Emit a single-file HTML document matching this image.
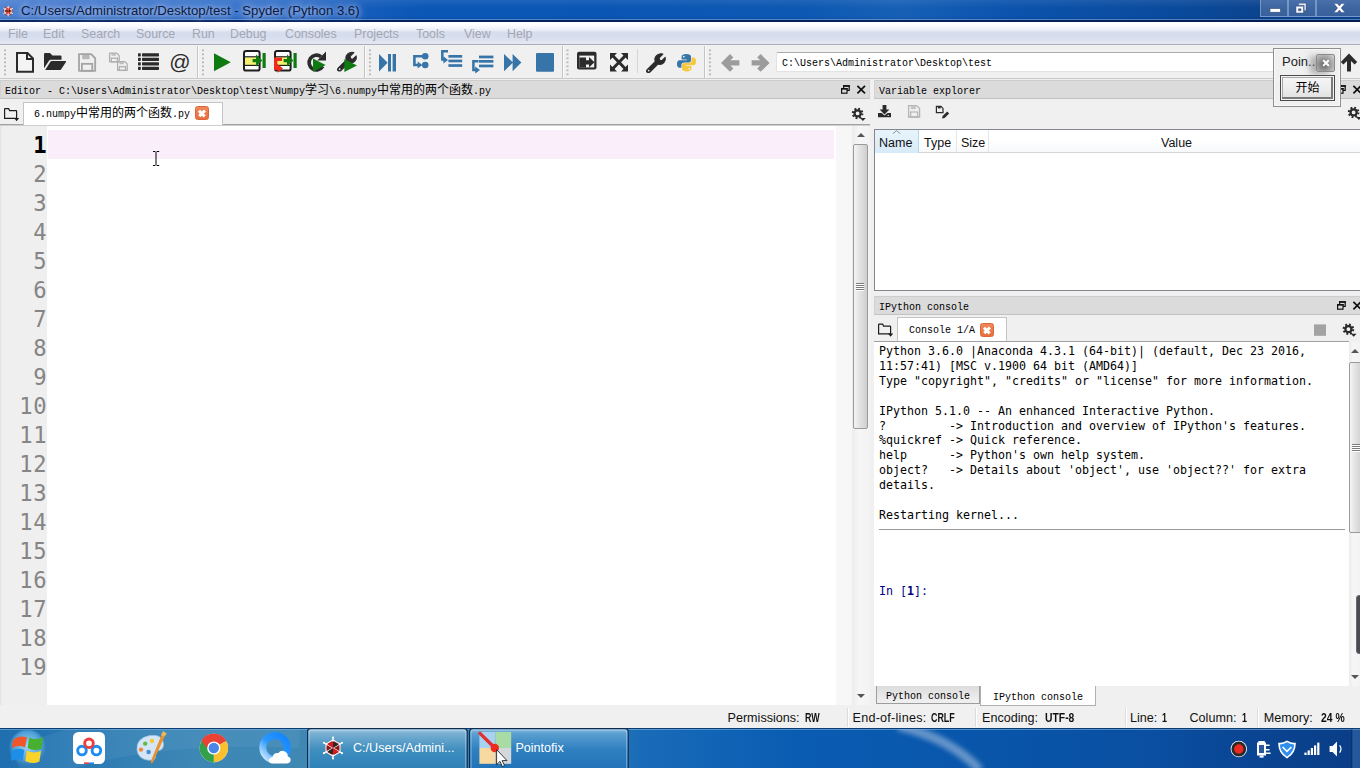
<!DOCTYPE html>
<html lang="zh">
<head>
<meta charset="utf-8">
<title>Spyder (Python 3.6)</title>
<style>
*{box-sizing:border-box;margin:0;padding:0}
html,body{width:1360px;height:768px;overflow:hidden;background:#f0f0f0}
body{position:relative;font-family:"Liberation Sans","Noto Sans CJK SC",sans-serif;font-size:12px;color:#000}
.abs{position:absolute}
.ui{font-family:"Liberation Sans","Noto Sans CJK SC",sans-serif}
.sim{font-family:"Liberation Mono","Noto Sans CJK SC",monospace;font-size:12px;white-space:pre;color:#000}
.sim i{font-style:normal;font-size:10px;letter-spacing:0}
.mono{font-family:"DejaVu Sans Mono","Liberation Mono",monospace}
svg{position:absolute;overflow:visible}

/* title bar */
#titlebar{left:0;top:0;width:1360px;height:22px;background:linear-gradient(90deg,#4f84d3 0,#4a80d0 16px,#3f78cd 150px,#2f6dc7 300px,#155cba 370px,#0b57b6 420px,#0a56b4 600px,#0d58b2 800px,#1760b6 900px,#0c54ae 1000px,#0a4a9c 1180px,#0b448e 1260px,#0b448e 1360px)}
#titlebar .shade{left:0;top:0;width:1360px;height:22px;background:linear-gradient(180deg,rgba(255,255,255,.08) 0,rgba(255,255,255,0) 8px,rgba(0,0,40,0) 16px,rgba(0,10,60,.12) 19.5px,rgba(130,175,230,.55) 19.5px,rgba(130,175,230,.55) 20.5px,rgba(0,20,70,.8) 20.5px,rgba(0,20,70,.8) 22px)}
#title{left:21px;top:2px;font-size:13.2px;line-height:17px;color:#0a1a40;white-space:pre;text-shadow:0 0 5px rgba(225,225,255,.7),0 0 9px rgba(215,220,255,.55),0 0 14px rgba(210,215,255,.45),0 2px 12px rgba(210,215,255,.4)}

/* menu */
#menubar{left:0;top:22px;width:1360px;height:23px;background:linear-gradient(180deg,#fff 0,#fdfdff 3px,#f3f5fc 6px,#e7ebf6 8.5px,#d6ddec 10px,#d6ddec 14px,#dce1ee 18px,#e3e7f1 21px,#e3e7f1 22px,#a9adb9 22px,#a9adb9 23px)}
#menubar span{position:absolute;top:5px;font-size:12.4px;line-height:15px;color:#a3a7b4;white-space:pre}

/* toolbar */
#toolbar{left:0;top:45px;width:1360px;height:35px;background:#f0f0f0}
.grip{position:absolute;top:50px;width:2px;height:26px;background:repeating-linear-gradient(180deg,#b8b8b8 0,#b8b8b8 1.5px,transparent 1.5px,transparent 4px)}
.vsep{position:absolute;top:47px;width:1px;height:31px;background:#d0d0d0;box-shadow:1px 0 0 #fff}

.docktitle{position:absolute;height:19px;background:#dbdbdb;border:1px solid #c2c2c2;border-left-color:#d2d2d2;border-right-color:#d2d2d2;border-top-color:#cdcdcd}
.docktitle .sim{position:absolute;left:4px;top:3px;line-height:14px}

/* panes */
.tabbar-line{position:absolute;height:2px;background:linear-gradient(180deg,#a2a2a2 0,#a2a2a2 1px,#cfcfcf 1px,#cfcfcf 2px)}
.tab{position:absolute;background:#fff;border:1px solid #c4c4c4;border-bottom:none}
.tab .sim{position:absolute;top:4px;line-height:14px}
.closeico{position:absolute;width:14px;height:14px;border-radius:2.5px;background:linear-gradient(180deg,#f0885a,#e86f3c);border:1px solid #d9673a}
.closeico:before,.closeico:after{content:"";position:absolute;left:2.2px;top:4.6px;width:7.6px;height:2.6px;background:#fff;transform:rotate(45deg)}
.closeico:after{transform:rotate(-45deg)}

#lnarea{left:0;top:126px;width:47px;height:579px;background:#efefef}
#edwhite{left:47px;top:126px;width:789px;height:579px;background:#fff}
#edgap{left:836px;top:126px;width:16px;height:579px;background:#f7f7f7}
#curline{left:48px;top:130px;width:786px;height:29px;background:#f9eef9}
.ln{position:absolute;left:0;width:47.4px;text-align:right;padding-right:0;font-size:22.2px;line-height:29px;color:#858585;letter-spacing:.7px}
.ln.cur{color:#000;font-weight:bold}

.vscroll{position:absolute;background:linear-gradient(90deg,#ececec,#f6f6f6 40%,#f3f3f3)}
.thumb{position:absolute;border:1px solid #9a9a9a;border-radius:2px;background:linear-gradient(90deg,#f4f4f4 0,#e2e2e2 45%,#cfcfcf 100%)}
.arr-up{position:absolute;width:0;height:0;border-left:4px solid transparent;border-right:4px solid transparent;border-bottom:4px solid #555}
.arr-dn{position:absolute;width:0;height:0;border-left:4px solid transparent;border-right:4px solid transparent;border-top:4px solid #555}
.gripv{position:absolute;width:8px;height:8px;background:repeating-linear-gradient(180deg,#7a7a7a 0,#7a7a7a 1px,#fff 1px,#fff 2px)}

#vartable{left:874px;top:129px;width:490px;height:162px;background:#fff;border:1px solid #828790}
#varhead{left:875px;top:130px;width:485px;height:23px;background:linear-gradient(180deg,#fff 0,#fff 50%,#f7f8fa 100%);border-bottom:1px solid #d5d5d5}
#varhead .hl{position:absolute;left:0;top:0;width:44px;height:23px;background:linear-gradient(180deg,#e8f4fb,#d6ebf8);border-right:1px solid #b8d6ea}
#varhead span{position:absolute;top:6px;font-size:12.5px;line-height:15px;color:#111}
#varhead .cs{position:absolute;top:0;width:1px;height:22px;background:#e4e5e8}

#console{left:874px;top:341px;width:475px;height:345px;background:#fff;border-top:1px solid #a0a0a0}
#context{left:879px;top:344px;font-size:11.63px;line-height:14.91px;white-space:pre;color:#000}
#prompt{left:879px;top:584px;font-size:11.63px;line-height:15px;white-space:pre;color:#000080}
#consep{left:879px;top:529px;width:466px;height:1px;background:#9a9a9a}

#statusbar{left:0;top:706px;width:1360px;height:22px;background:#f0f0f0}
#statusbar span{position:absolute;top:5px;font-size:12.6px;line-height:15px;white-space:pre;color:#111}
#statusbar b{position:absolute;top:5px;font-size:12.2px;line-height:15px;white-space:pre;color:#111;transform-origin:0 50%;transform:scaleX(.73)}
#statusbar .ss{position:absolute;top:2px;width:1px;height:19px;background:#dcdcdc;box-shadow:1px 0 0 #fff}

#taskbar{left:0;top:728px;width:1360px;height:40px;background:linear-gradient(90deg,#1f6eae 0,#2676b2 60px,#3380b4 130px,#3d87b5 200px,#3f88b4 300px,#2a78b6 600px,#1a6cb8 640px,#1163b6 720px,#0a5cb2 800px,#0857ac 950px,#0a4fa2 1150px,#0a4492 1260px,#0a3d86 1360px)}

#pathbox{left:776px;top:52px;width:520px;height:20px;background:#fff;border:1px solid #e2e2e2;border-top-color:#ababab;border-radius:2px}
#pathbox .sim{position:absolute;left:5px;top:3px;line-height:14px}

.btab{position:absolute}
.btab .sim{position:absolute;left:0;right:0;top:3px;line-height:14px;text-align:center}
#pfx{left:1273px;top:48px;width:68px;height:59px;background:#f0f0f0;border:1px solid #8e8e8e;box-shadow:0 0 0 1px rgba(255,255,255,.6) inset}
#pfx .t{position:absolute;left:8px;top:5px;font-size:13px;line-height:16px;color:#222}
#pfx .x{position:absolute;left:42px;top:5px;width:19px;height:18px;border:1px solid #8a8a8a;border-radius:2px;background:radial-gradient(circle at 40% 60%,#6a6a6a 0,#9a9a9a 45%,#d8d8d8 100%);box-shadow:-6px 2px 6px rgba(120,120,120,.55)}
#pfx .x:before,#pfx .x:after{content:"";position:absolute;left:4.5px;top:6.8px;width:8px;height:2.2px;background:#fff;transform:rotate(45deg)}
#pfx .x:after{transform:rotate(-45deg)}
#pfx .btn{position:absolute;left:6px;top:26px;width:55px;height:26px;border:1px solid #4a4a4a;box-shadow:0 0 0 1px #f4f4f4 inset,-1px -1px 0 2px #7a7a7a inset,0 0 0 2px #a8a8a8 inset;background:linear-gradient(180deg,#f7f7f7,#ececec 55%,#dedede);text-align:center}
#pfx .btn span{font-family:"Liberation Sans","Noto Sans CJK SC",sans-serif;font-size:12px;line-height:24px;color:#000}
#winbtns{left:1260px;top:0;width:100px;height:18px}
#winbtns .wb{position:absolute;top:0;height:16.5px;border:1px solid rgba(150,180,225,.6);border-top:none;background:linear-gradient(180deg,#4a70aa,#3d659f 50%,#38609c)}
</style>
</head>
<body>

<!-- ===== window title bar ===== -->
<div id="titlebar" class="abs">
  <div class="shade abs"></div>
  <svg style="left:2px;top:5px" width="13" height="13" viewBox="0 0 13 13"><circle cx="6.2" cy="6" r="4.6" fill="#a01c14"/><path d="M6.2,0.6 V11.4 M1.4,3.2 L11,8.8 M1.4,8.8 L11,3.2" stroke="#f4e8f0" stroke-width=".9"/><path d="M6.2,2 L9.8,4 V8 L6.2,10 L2.6,8 V4 Z" fill="none" stroke="#f4e8f0" stroke-width=".8"/><circle cx="6.2" cy="6" r="2.2" fill="#e2502a"/><path d="M4.4,4.6 L6.2,6 L4.4,7.6 Z M8,4.6 L6.2,6 L8,7.6 Z" fill="#3a1410"/></svg>
  <div id="title" class="abs ui">C:/Users/Administrator/Desktop/test - Spyder (Python 3.6)</div>
</div>

<!-- ===== menu bar ===== -->
<div id="menubar" class="abs ui">
  <span style="left:8px">File</span>
  <span style="left:43px">Edit</span>
  <span style="left:81px">Search</span>
  <span style="left:136px">Source</span>
  <span style="left:192px">Run</span>
  <span style="left:230px">Debug</span>
  <span style="left:285px">Consoles</span>
  <span style="left:354px">Projects</span>
  <span style="left:416px">Tools</span>
  <span style="left:464px">View</span>
  <span style="left:507px">Help</span>
</div>

<!-- ===== toolbar ===== -->
<div id="toolbar" class="abs"></div>
<div id="pathbox" class="abs"><div class="sim"><i>C:\Users\Administrator\Desktop\test</i></div></div>
<svg id="tbicons" style="left:0;top:0" width="1360" height="130" viewBox="0 0 1360 130">
<rect x="4" y="49.5" width="2" height="1.6" fill="#b4b4b4"/>
<rect x="4" y="53.5" width="2" height="1.6" fill="#b4b4b4"/>
<rect x="4" y="57.5" width="2" height="1.6" fill="#b4b4b4"/>
<rect x="4" y="61.5" width="2" height="1.6" fill="#b4b4b4"/>
<rect x="4" y="65.5" width="2" height="1.6" fill="#b4b4b4"/>
<rect x="4" y="69.5" width="2" height="1.6" fill="#b4b4b4"/>
<rect x="4" y="73.5" width="2" height="1.6" fill="#b4b4b4"/>
<rect x="202" y="49.5" width="2" height="1.6" fill="#b4b4b4"/>
<rect x="202" y="53.5" width="2" height="1.6" fill="#b4b4b4"/>
<rect x="202" y="57.5" width="2" height="1.6" fill="#b4b4b4"/>
<rect x="202" y="61.5" width="2" height="1.6" fill="#b4b4b4"/>
<rect x="202" y="65.5" width="2" height="1.6" fill="#b4b4b4"/>
<rect x="202" y="69.5" width="2" height="1.6" fill="#b4b4b4"/>
<rect x="202" y="73.5" width="2" height="1.6" fill="#b4b4b4"/>
<rect x="369" y="49.5" width="2" height="1.6" fill="#b4b4b4"/>
<rect x="369" y="53.5" width="2" height="1.6" fill="#b4b4b4"/>
<rect x="369" y="57.5" width="2" height="1.6" fill="#b4b4b4"/>
<rect x="369" y="61.5" width="2" height="1.6" fill="#b4b4b4"/>
<rect x="369" y="65.5" width="2" height="1.6" fill="#b4b4b4"/>
<rect x="369" y="69.5" width="2" height="1.6" fill="#b4b4b4"/>
<rect x="369" y="73.5" width="2" height="1.6" fill="#b4b4b4"/>
<rect x="566.5" y="49.5" width="2" height="1.6" fill="#b4b4b4"/>
<rect x="566.5" y="53.5" width="2" height="1.6" fill="#b4b4b4"/>
<rect x="566.5" y="57.5" width="2" height="1.6" fill="#b4b4b4"/>
<rect x="566.5" y="61.5" width="2" height="1.6" fill="#b4b4b4"/>
<rect x="566.5" y="65.5" width="2" height="1.6" fill="#b4b4b4"/>
<rect x="566.5" y="69.5" width="2" height="1.6" fill="#b4b4b4"/>
<rect x="566.5" y="73.5" width="2" height="1.6" fill="#b4b4b4"/>
<rect x="709" y="49.5" width="2" height="1.6" fill="#b4b4b4"/>
<rect x="709" y="53.5" width="2" height="1.6" fill="#b4b4b4"/>
<rect x="709" y="57.5" width="2" height="1.6" fill="#b4b4b4"/>
<rect x="709" y="61.5" width="2" height="1.6" fill="#b4b4b4"/>
<rect x="709" y="65.5" width="2" height="1.6" fill="#b4b4b4"/>
<rect x="709" y="69.5" width="2" height="1.6" fill="#b4b4b4"/>
<rect x="709" y="73.5" width="2" height="1.6" fill="#b4b4b4"/>
<rect x="197.0" y="46" width="1" height="32" fill="#c4c4c4"/><rect x="198.0" y="46" width="1" height="32" fill="#fbfbfb"/>
<rect x="364.0" y="46" width="1" height="32" fill="#c4c4c4"/><rect x="365.0" y="46" width="1" height="32" fill="#fbfbfb"/>
<rect x="562.0" y="46" width="1" height="32" fill="#c4c4c4"/><rect x="563.0" y="46" width="1" height="32" fill="#fbfbfb"/>
<rect x="704.0" y="46" width="1" height="32" fill="#c4c4c4"/><rect x="705.0" y="46" width="1" height="32" fill="#fbfbfb"/>
<rect x="637" y="49" width="1" height="24" fill="#d6d6d6"/>
<path d="M17,53 H27.5 L33,58.5 V71.7 H17 Z" fill="#f4f4f4" stroke="#2b2b2b" stroke-width="2" stroke-linejoin="miter"/><path d="M27,53.5 V59 H32.5" fill="none" stroke="#2b2b2b" stroke-width="2"/>
<path d="M44,54.2 Q44,53 45.2,53 H50 L52.5,55.5 H60.5 Q61.5,55.5 61.5,56.5 V59.8 H50.5 Q49.6,59.8 49,60.7 L44,68.3 Z" fill="#2b2b2b"/><path d="M45.2,70 L50.6,61.6 Q51,61 51.8,61 H65.2 Q66.6,61 65.8,62.2 L61,69.4 Q60.6,70 59.8,70 Z" fill="#2b2b2b"/>
<path d="M79,54.2 H91.15 L95.2,58.25 V70.80000000000001 H79 Z" fill="none" stroke="#a4a4a4" stroke-width="1.8" stroke-linejoin="round"/><rect x="82.24" y="54.2" width="7.29" height="4.98" fill="#a4a4a4" opacity=".75"/><rect x="81.916" y="63.828" width="10.368" height="6.972" fill="none" stroke="#a4a4a4" stroke-width="1.8"/>
<path d="M109.6,53.2 H116.79999999999998 L119.19999999999999,55.6 V61.800000000000004 H109.6 Z" fill="none" stroke="#b0b0b0" stroke-width="1.3" stroke-linejoin="round"/><rect x="111.52" y="53.2" width="4.32" height="2.5799999999999996" fill="#b0b0b0" opacity=".75"/><rect x="111.32799999999999" y="58.188" width="6.144" height="3.6119999999999997" fill="none" stroke="#b0b0b0" stroke-width="1.3"/>
<path d="M117.6,61.6 H124.79999999999998 L127.19999999999999,64.0 V70.4 H117.6 Z" fill="none" stroke="#b0b0b0" stroke-width="1.3" stroke-linejoin="round"/><rect x="119.52" y="61.6" width="4.32" height="2.64" fill="#b0b0b0" opacity=".75"/><rect x="119.32799999999999" y="66.70400000000001" width="6.144" height="3.696" fill="none" stroke="#b0b0b0" stroke-width="1.3"/>
<rect x="138" y="53.2" width="2.8" height="3.2" rx=".6" fill="#2b2b2b"/><rect x="142" y="53.2" width="17" height="3.2" rx=".6" fill="#2b2b2b"/>
<rect x="138" y="57.7" width="2.8" height="3.2" rx=".6" fill="#2b2b2b"/><rect x="142" y="57.7" width="17" height="3.2" rx=".6" fill="#2b2b2b"/>
<rect x="138" y="62.2" width="2.8" height="3.2" rx=".6" fill="#2b2b2b"/><rect x="142" y="62.2" width="17" height="3.2" rx=".6" fill="#2b2b2b"/>
<rect x="138" y="66.7" width="2.8" height="3.2" rx=".6" fill="#2b2b2b"/><rect x="142" y="66.7" width="17" height="3.2" rx=".6" fill="#2b2b2b"/>
<text x="180" y="68.5" text-anchor="middle" font-family="Liberation Sans, sans-serif" font-size="21" fill="#2b2b2b">@</text>
<path d="M214,53.3 L230.8,62.3 L214,71.3 Z" fill="#0f7a10"/>
<rect x="244" y="51" width="15.6" height="19.6" rx="2.2" fill="#fdfdfd" stroke="#1e1e1e" stroke-width="2"/><rect x="245" y="57.2" width="13.6" height="7.8" fill="#f6f072"/><rect x="244" y="56.2" width="15.6" height="1.2" fill="#1e1e1e"/><rect x="244" y="64.8" width="15.6" height="1.2" fill="#1e1e1e"/><path d="M252.6,58.9 H256 V54.6 L262.4,60.6 L256,66.6 V62.3 H252.6 Z" fill="#0f7a10"/><rect x="262.5" y="53" width="3.2" height="15" fill="#0f7a10"/>
<rect x="275" y="51" width="15.6" height="19.6" rx="2.2" fill="#fdfdfd" stroke="#1e1e1e" stroke-width="2"/><rect x="276" y="57.2" width="13.6" height="7.8" fill="#f6f072"/><rect x="275" y="56.2" width="15.6" height="1.2" fill="#1e1e1e"/><rect x="275" y="64.8" width="15.6" height="1.2" fill="#1e1e1e"/><path d="M283.6,58.9 H287 V54.6 L293.4,60.6 L287,66.6 V62.3 H283.6 Z" fill="#0f7a10"/><rect x="293.5" y="53" width="3.2" height="15" fill="#0f7a10"/>
<path d="M282,57.6 H274 V70 H277.6 V72.8 L283,68.4 L277.6,64 V66.6 H277.4 V61 H282 Z" fill="#ee2a1c"/>
<path d="M321,56.6 A7.4,7.4 0 1 0 322.8,66.4" fill="none" stroke="#2b2b2b" stroke-width="3.6"/><path d="M326,51.6 V60.4 H317.2 Z" fill="#2b2b2b"/>
<path d="M313,58.4 L325.6,65 L313,71.8 Z" fill="#0f7a10"/>
<g transform="translate(337,52) scale(0.98)"><path d="M2.2,19.4 Q0.6,19.6 0.6,17.8 Q0.6,17 1.2,16.4 L9.4,8.2 Q8.2,4.6 11,2 Q13.8,-0.4 17.2,0.6 L13.4,4.4 L14,6.8 L16.2,7.4 L19.6,4 Q20.4,7 18.2,9.4 Q15.6,12 12.2,10.8 L4,19 Q3.2,19.6 2.2,19.4 Z" fill="#2b2b2b" stroke="#2b2b2b" stroke-width="1.1" stroke-linejoin="round"/><circle cx="2.7" cy="17.4" r=".9" fill="#f0f0f0"/></g>
<path d="M344.4,59 L357,65.4 L344.4,72 Z" fill="#0f7a10"/>
<path d="M379,54 L387.6,62.8 L379,71.5 Z" fill="#3775a9"/><rect x="388" y="54" width="3" height="17.5" fill="#3775a9"/><rect x="392.6" y="54" width="3.4" height="17.5" fill="#3775a9"/>
<circle cx="425.2" cy="56.2" r="3.3" fill="#3775a9"/><circle cx="425.2" cy="65" r="3.3" fill="#3775a9"/><path d="M422,56.2 H414.4 V65 H418.5" fill="none" stroke="#3775a9" stroke-width="2.6"/><path d="M417.6,61.4 L422.4,65 L417.6,68.6 Z" fill="#3775a9"/>
<rect x="448.4" y="55" width="13.8" height="2.7" fill="#3775a9"/>
<rect x="448.4" y="59.6" width="13.8" height="2.7" fill="#3775a9"/>
<rect x="448.4" y="64.2" width="13.8" height="2.7" fill="#3775a9"/>
<path d="M448,51.3 H442.3 V59.6 H444" fill="none" stroke="#3775a9" stroke-width="2.5"/><path d="M443.4,56.2 L448,60 L443.4,63.6 Z" fill="#3775a9"/>
<rect x="479" y="55.6" width="14.4" height="2.7" fill="#3775a9"/>
<rect x="479" y="60" width="14.4" height="2.7" fill="#3775a9"/>
<rect x="479" y="64.6" width="14.4" height="2.7" fill="#3775a9"/>
<path d="M478.5,61.3 H473.4 V70 H476" fill="none" stroke="#3775a9" stroke-width="2.5"/><path d="M475.2,66.4 L480,70 L475.2,73.4 Z" fill="#3775a9"/>
<path d="M504,54 L513,62.6 L504,71.2 Z M512.6,54 L521.4,62.6 L512.6,71.2 Z" fill="#3775a9"/>
<rect x="536" y="53" width="18" height="18.8" rx="1" fill="#3775a9"/>
<rect x="577" y="51.8" width="19.5" height="17.8" rx="2" fill="#2b2b2b"/><rect x="579.4" y="55.6" width="14.8" height="11.8" fill="#f2f2f2"/><path d="M579.4,57.6 H586 V60.2 H589 V57 L594.4,62.2 L589,67.4 V64.4 H586 V67.4 H579.4 Z" fill="#2b2b2b"/>
<path d="M612.5,55.5 L625.5,69 M625.5,55.5 L612.5,69" stroke="#2b2b2b" stroke-width="3" fill="none"/><path d="M610,53 H617 L610,60 Z M628,53 V60 L621,53 Z M610,71.5 V64.5 L617,71.5 Z M628,71.5 H621 L628,64.5 Z" fill="#2b2b2b"/>
<g transform="translate(646,53.5) scale(0.98)"><path d="M2.2,19.4 Q0.6,19.6 0.6,17.8 Q0.6,17 1.2,16.4 L9.4,8.2 Q8.2,4.6 11,2 Q13.8,-0.4 17.2,0.6 L13.4,4.4 L14,6.8 L16.2,7.4 L19.6,4 Q20.4,7 18.2,9.4 Q15.6,12 12.2,10.8 L4,19 Q3.2,19.6 2.2,19.4 Z" fill="#2b2b2b" stroke="#2b2b2b" stroke-width="1.1" stroke-linejoin="round"/><circle cx="2.7" cy="17.4" r=".9" fill="#f0f0f0"/></g>
<path d="M686.2,54 Q681.6,54 681.6,56.8 V59.4 H686.8 V60.2 H679.6 Q677,60.2 677,64 Q677,67.8 679.6,67.8 H681.4 V65.2 Q681.4,62.4 684.2,62.4 H688.8 Q691,62.4 691,60.2 V56.8 Q691,54 686.2,54 Z" fill="#3775a9"/><circle cx="683.8" cy="56.6" r=".9" fill="#f0f0f0"/><path d="M686.8,71.4 Q691.4,71.4 691.4,68.6 V66 H686.2 V65.2 H693.4 Q696,65.2 696,61.4 Q696,57.6 693.4,57.6 H691.6 V60.2 Q691.6,63 688.8,63 H684.2 Q682,63 682,65.2 V68.6 Q682,71.4 686.8,71.4 Z" fill="#f7c83c"/><circle cx="689.2" cy="68.8" r=".9" fill="#f0f0f0"/>
<path d="M721,62.9 L730,54 L733.4,57.4 L730.4,60.2 H739.4 V65.6 H730.4 L733.4,68.4 L730,71.8 Z" fill="#9c9c9c"/>
<path d="M769.6,62.9 L760.6,54 L757.2,57.4 L760.2,60.2 H751.6 V65.6 H760.2 L757.2,68.4 L760.6,71.8 Z" fill="#9c9c9c"/>
<path d="M1349,53.6 L1357.2,62 L1354.6,64.6 L1351,61 V71.4 H1347 V61 L1343.4,64.6 L1340.8,62 Z" fill="#2b2b2b"/>
</svg>

<!-- ===== Editor dock ===== -->
<div class="abs" style="left:0;top:78px;width:1360px;height:1px;background:#c9c9c9"></div>
<div class="docktitle" style="left:0;top:80px;width:870px"><div class="sim"><i>Editor - C:\Users\Administrator\Desktop\test\Numpy</i>学习<i>\6.numpy</i>中常用的两个函数<i>.py</i></div></div>
<div class="tabbar-line" style="left:0;top:124px;width:870px"></div>
<div class="tab" style="left:23px;top:102px;width:200px;height:23px"><div class="sim" style="left:10px"><i>6.numpy</i>中常用的两个函数<i>.py</i></div><div class="closeico" style="left:171px;top:3px"></div></div>

<div id="lnarea" class="abs"></div><div class="abs" style="left:0;top:126px;width:2px;height:579px;background:linear-gradient(90deg,#e2e2e2,#ededed)"></div>
<div id="edwhite" class="abs"></div>
<div id="edgap" class="abs"></div>
<div id="curline" class="abs"></div>
<div id="lns" class="mono">
<div class="ln cur" style="top:131px">1</div>
<div class="ln" style="top:160px">2</div>
<div class="ln" style="top:189px">3</div>
<div class="ln" style="top:218px">4</div>
<div class="ln" style="top:247px">5</div>
<div class="ln" style="top:276px">6</div>
<div class="ln" style="top:305px">7</div>
<div class="ln" style="top:334px">8</div>
<div class="ln" style="top:363px">9</div>
<div class="ln" style="top:392px">10</div>
<div class="ln" style="top:421px">11</div>
<div class="ln" style="top:450px">12</div>
<div class="ln" style="top:479px">13</div>
<div class="ln" style="top:508px">14</div>
<div class="ln" style="top:537px">15</div>
<div class="ln" style="top:566px">16</div>
<div class="ln" style="top:595px">17</div>
<div class="ln" style="top:624px">18</div>
<div class="ln" style="top:653px">19</div>
</div>
<div class="vscroll" style="left:852px;top:126px;width:18px;height:579px"></div>
<div class="arr-up" style="left:856.5px;top:133px"></div>
<div class="thumb" style="left:853px;top:144px;width:15px;height:285px"></div>
<div class="gripv" style="left:856px;top:283px"></div>
<div class="arr-dn" style="left:856.5px;top:694px"></div>

<!-- ===== Variable explorer ===== -->
<div class="docktitle" style="left:874px;top:80px;width:490px"><div class="sim"><i>Variable explorer</i></div></div>
<div id="vartable" class="abs"></div>
<div id="varhead" class="abs ui"><div class="hl"></div>
  <span style="left:4px">Name</span><span style="left:49px">Type</span><span style="left:86px">Size</span><span style="left:286px">Value</span>
  <div class="cs" style="left:81px"></div><div class="cs" style="left:113px"></div>
</div>

<!-- ===== IPython console ===== -->
<div class="docktitle" style="left:874px;top:296px;width:490px"><div class="sim"><i>IPython console</i></div></div>
<div class="tab" style="left:897px;top:317px;width:110px;height:24px"><div class="sim" style="left:11px;top:5px"><i>Console 1/A</i></div><div class="closeico" style="left:82px;top:5px"></div></div>
<div id="console" class="abs"></div>
<pre id="context" class="abs mono">Python 3.6.0 |Anaconda 4.3.1 (64-bit)| (default, Dec 23 2016,
11:57:41) [MSC v.1900 64 bit (AMD64)]
Type "copyright", "credits" or "license" for more information.

IPython 5.1.0 -- An enhanced Interactive Python.
?         -&gt; Introduction and overview of IPython's features.
%quickref -&gt; Quick reference.
help      -&gt; Python's own help system.
object?   -&gt; Details about 'object', use 'object??' for extra
details.

Restarting kernel...</pre>
<div id="consep" class="abs"></div>
<pre id="prompt" class="abs mono">In [<b>1</b>]:</pre>
<div class="vscroll" style="left:1349px;top:342px;width:11px;height:344px"></div>

<svg id="misc" style="left:0;top:0" width="1360" height="768" viewBox="0 0 1360 768">
<path d="M4.6,109.2 Q4.6,108.6 5.2,108.6 H8.6 L9.6,110.6 H16 Q16.6,110.6 16.6,111.2 V118.4 H4.6 Z" fill="none" stroke="#1c1c1c" stroke-width="1.2"/><path d="M14.0,118.0 H19.2 L16.6,121.2 Z" fill="#1c1c1c"/>
<path d="M878.6,324.7 Q878.6,324.1 879.2,324.1 H882.6 L883.6,326.1 H890 Q890.6,326.1 890.6,326.7 V333.9 H878.6 Z" fill="none" stroke="#1c1c1c" stroke-width="1.2"/><path d="M888.0,333.5 H893.1999999999999 L890.6,336.7 Z" fill="#1c1c1c"/>
<circle cx="857.6" cy="113.4" r="4.5" fill="none" stroke="#2b2b2b" stroke-width="2.6" stroke-dasharray="1.767"/><circle cx="857.6" cy="113.4" r="2.9999999999999996" fill="none" stroke="#2b2b2b" stroke-width="2.2"/><path d="M860.0,118.0 H865.8000000000001 L862.9,121.0 Z" fill="#2b2b2b"/>
<circle cx="1353.6" cy="112.4" r="4.5" fill="none" stroke="#2b2b2b" stroke-width="2.6" stroke-dasharray="1.767"/><circle cx="1353.6" cy="112.4" r="2.9999999999999996" fill="none" stroke="#2b2b2b" stroke-width="2.2"/><path d="M1356.0,117.0 H1361.8 L1358.8999999999999,120.0 Z" fill="#2b2b2b"/>
<circle cx="1348.4" cy="329.2" r="4.5" fill="none" stroke="#2b2b2b" stroke-width="2.6" stroke-dasharray="1.767"/><circle cx="1348.4" cy="329.2" r="2.9999999999999996" fill="none" stroke="#2b2b2b" stroke-width="2.2"/><path d="M1350.8000000000002,333.8 H1356.6000000000001 L1353.7,336.8 Z" fill="#2b2b2b"/>
<rect x="843.6" y="85.8" width="5.6" height="4.6" fill="none" stroke="#111" stroke-width="1.2"/><rect x="843" y="85.2" width="6.8" height="1.6" fill="#111"/><rect x="841.6" y="88.60000000000001" width="5.4" height="4.6" fill="#dadada" stroke="#111" stroke-width="1.2"/><rect x="841" y="88.0" width="6.6" height="1.6" fill="#111"/>
<path d="M857.4,85.8 L865.0,93.39999999999999 M865.0,85.8 L857.4,93.39999999999999" stroke="#111" stroke-width="1.7"/>
<rect x="1339.6" y="301.8" width="5.6" height="4.6" fill="none" stroke="#111" stroke-width="1.2"/><rect x="1339" y="301.2" width="6.8" height="1.6" fill="#111"/><rect x="1337.6" y="304.59999999999997" width="5.4" height="4.6" fill="#dadada" stroke="#111" stroke-width="1.2"/><rect x="1337" y="304.0" width="6.6" height="1.6" fill="#111"/>
<path d="M1353.4,301.8 L1361.0,309.40000000000003 M1361.0,301.8 L1353.4,309.40000000000003" stroke="#111" stroke-width="1.7"/>
<rect x="1339.6" y="85.8" width="5.6" height="4.6" fill="none" stroke="#111" stroke-width="1.2"/><rect x="1339" y="85.2" width="6.8" height="1.6" fill="#111"/><rect x="1337.6" y="88.60000000000001" width="5.4" height="4.6" fill="#dadada" stroke="#111" stroke-width="1.2"/><rect x="1337" y="88.0" width="6.6" height="1.6" fill="#111"/>
<path d="M1353.4,85.8 L1361.0,93.39999999999999 M1361.0,85.8 L1353.4,93.39999999999999" stroke="#111" stroke-width="1.7"/>
<path d="M882.6,105 H886.4 V109.6 H889.4 L884.5,114.4 L879.6,109.6 H882.6 Z" fill="#2b2b2b"/><path d="M878,113 H881.6 L884.5,115.6 L887.4,113 H891 V117.2 H878 Z" fill="#2b2b2b"/><rect x="887.6" y="114.8" width="1.2" height="1.2" fill="#f0f0f0"/>
<path d="M908.6,105.6 H916.6 L919.6,108.6 V117 H908.6 Z" fill="none" stroke="#b4b4b4" stroke-width="1.3"/><rect x="910.8" y="105.6" width="5" height="3.6" fill="#c4c4c4"/><rect x="910.6" y="112" width="7" height="5" fill="none" stroke="#b4b4b4" stroke-width="1.2"/>
<path d="M936.4,106.4 H941 L943,108.4 V112.6 H936.4 Z" fill="none" stroke="#2b2b2b" stroke-width="1.2"/><rect x="937.8" y="106" width="3" height="2.4" fill="#2b2b2b"/><path d="M942,118.6 L942.6,116 L947.2,111.4 L949.2,113.4 L944.6,118 Z" fill="#2b2b2b"/>
<rect x="1314" y="324.4" width="12" height="11.4" fill="#a3a3a3"/>
<path d="M893,133.6 L896.6,130.6 L900.2,133.6" fill="none" stroke="#8a8f98" stroke-width="1"/>
<path d="M153,151.5 H155.4 M156.6,151.5 H159.2 M153,165.5 H155.4 M156.6,165.5 H159.2 M156,152 V165" stroke="#000" stroke-width="1" fill="none"/>
</svg>


<div class="btab" style="left:876px;top:686px;width:104px;height:18px;background:linear-gradient(180deg,#dcdcdc,#e9e9e9 60%,#f0f0f0);border:1px solid #9d9d9d;border-top:none"><div class="sim"><i>Python console</i></div></div>
<div class="btab" style="left:980px;top:686px;width:116px;height:20px;background:#fff;border:1px solid #b0b0b0;border-top:none"><div class="sim" style="top:4px"><i>IPython console</i></div></div>
<div class="arr-up" style="left:1350.5px;top:348.5px"></div>
<div class="thumb" style="left:1349px;top:362px;width:14px;height:171px"></div>
<div class="gripv" style="left:1352px;top:444px"></div>
<div class="arr-dn" style="left:1351px;top:675px"></div>
<div class="abs" style="left:1355.5px;top:595px;width:8px;height:59px;border-radius:3px;background:#4b4c52;border:1px solid #6a6b70"></div>

<!-- Pointofix floating popup -->
<div id="pfx" class="abs"><div class="t ui">Poin...</div><div class="x"></div><div class="btn"><span>开始</span></div></div>

<!-- window buttons -->
<div id="winbtns" class="abs"><div class="wb" style="left:0;width:28px"></div><div class="wb" style="left:28px;width:28px"></div><div class="wb" style="left:56px;width:46px"></div>
<svg style="left:0;top:0" width="100" height="18" viewBox="0 0 100 18"><rect x="10" y="8.6" width="10.4" height="3.6" fill="#fff" stroke="#3a4f78" stroke-width=".6"/>
<path d="M38.6,3.2 H46 V10.4 H44.2 V5.2 H38.6 Z" fill="#fff" stroke="#3a4f78" stroke-width=".5"/><path d="M36,6.2 H43.4 V13 H36 Z M38.4,8.8 V10.8 H41 V8.8 Z" fill="#fff" fill-rule="evenodd" stroke="#3a4f78" stroke-width=".5"/>
<path d="M73.8,3.6 H77.4 L79.4,6 L81.4,3.6 H85 L81.2,8 L85,12.4 H81.4 L79.4,10 L77.4,12.4 H73.8 L77.6,8 Z" fill="#fff" stroke="#3a4f78" stroke-width=".5"/></svg></div>

<!-- ===== status bar ===== -->
<div id="statusbar" class="abs ui">
  <span style="left:727.5px">Permissions:</span><b style="left:805px">RW</b>
  <span style="left:852.5px;letter-spacing:.25px">End-of-lines:</span><b style="left:931px">CRLF</b>
  <span style="left:982px">Encoding:</span><b style="left:1044.6px;transform:scaleX(.85)">UTF-8</b>
  <span style="left:1130px">Line:</span><b style="left:1161.6px">1</b>
  <span style="left:1189.5px">Column:</span><b style="left:1242px">1</b>
  <span style="left:1263.8px">Memory:</span><b style="left:1321px;transform:scaleX(.85)">24 %</b>
  <div class="ss" style="left:847px"></div><div class="ss" style="left:975px"></div><div class="ss" style="left:1125px"></div><div class="ss" style="left:1257px"></div>
</div>

<!-- ===== taskbar ===== -->
<div id="taskbar" class="abs"></div>
<svg id="tbar" style="left:0;top:728px;overflow:hidden" width="1360" height="40" viewBox="0 728 1360 40">
<defs>
<radialGradient id="orbg" cx=".5" cy=".45" r=".55"><stop offset="0" stop-color="#9fd4f4"/><stop offset=".7" stop-color="#4fa0d8"/><stop offset="1" stop-color="#2a78b8" stop-opacity=".2"/></radialGradient>
<linearGradient id="tbtn" x1="0" y1="0" x2="0" y2="1"><stop offset="0" stop-color="#a8cbe2"/><stop offset=".12" stop-color="#78afd2"/><stop offset=".5" stop-color="#3f8ebf"/><stop offset="1" stop-color="#2a7fb6"/></linearGradient>
<linearGradient id="tbtn2" x1="0" y1="0" x2="0" y2="1"><stop offset="0" stop-color="#8fbfe0"/><stop offset=".12" stop-color="#5a9fd0"/><stop offset=".5" stop-color="#2f80c0"/><stop offset="1" stop-color="#1f72b8"/></linearGradient>
<linearGradient id="qqg" x1="1" y1="0" x2="0" y2="1"><stop offset="0" stop-color="#1384ff"/><stop offset=".55" stop-color="#2b98ff"/><stop offset="1" stop-color="#d8eeff"/></linearGradient>
<linearGradient id="swoosh" x1="0" y1="0" x2="1" y2="0"><stop offset="0" stop-color="#fff" stop-opacity="0"/><stop offset=".5" stop-color="#cfe0f0" stop-opacity=".55"/><stop offset="1" stop-color="#fff" stop-opacity="0"/></linearGradient>
</defs>
<path d="M898,726 Q950,738 980,770" fill="none" stroke="#c4d4e8" stroke-opacity=".5" stroke-width="9" style="filter:blur(2.5px)"/>
<path d="M20,768 Q120,720 300,728" fill="none" stroke="#8cc0e0" stroke-opacity=".12" stroke-width="40"/>
<rect x="0" y="728" width="1360" height="1" fill="#0c3c74"/><rect x="0" y="729" width="1360" height="1" fill="#7fb4dc" fill-opacity=".6"/>
<circle cx="27.5" cy="748" r="18.5" fill="url(#orbg)"/>
<path d="M13,740 Q19,734.5 27,737.5 L25,747.5 Q18.5,744.5 12,748 Z" fill="#f0562a"/>
<path d="M29.4,737.6 Q36,741 43,737 L41.6,748.4 Q35,751.8 27.6,748 Z" fill="#48b030"/>
<path d="M11.6,750.6 Q18,747 24.4,750 L22.6,760.6 Q17,757.6 11,761 Z" fill="#1d8fe8"/>
<path d="M27,750.6 Q33.6,754.4 41,750.8 L39.4,761.4 Q32.6,765 25.2,761 Z" fill="#f8d42a"/>
<rect x="73" y="732" width="32" height="32" rx="5.5" fill="#fff"/>
<circle cx="82" cy="750.6" r="4.3" fill="none" stroke="#1f8cf0" stroke-width="2.9"/><circle cx="96.4" cy="750.6" r="4.3" fill="none" stroke="#1f8cf0" stroke-width="2.9"/><circle cx="89" cy="743.3" r="4.3" fill="none" stroke="#ee3c3c" stroke-width="2.9"/>
<rect x="84" y="762.4" width="5" height="1.6" fill="#ee3c3c"/><rect x="89" y="762.4" width="5" height="1.6" fill="#1f8cf0"/>
<path d="M137,750 Q136,738 150,735.5 Q163,734 163.5,744 Q163.6,750 158,750.6 Q154,751.2 155.4,755 Q157,760.6 148.6,760.2 Q138.4,759.4 137,750 Z" fill="#d4e6f6" stroke="#9cc0e0" stroke-width=".8"/>
<circle cx="141" cy="749.6" r="2.2" fill="#f08a3a"/><circle cx="145.2" cy="743.6" r="2.2" fill="#64b848"/><circle cx="152" cy="741" r="2.2" fill="#f4c838"/><circle cx="148.6" cy="752" r="2.2" fill="#4a8cd0"/>
<path d="M161.6,734.6 L164.8,736 L153,762.4 L150.8,763.6 L151,761 Z" fill="#e8912e"/><path d="M161,735 L163,731 L166.8,733.4 L164.6,736.6 Z" fill="#f0b45a"/>
<circle cx="213.8" cy="748" r="14.2" fill="#fff"/>
<path d="M213.8,748 L201.5,740.9 A14.2,14.2 0 0 1 226.1,740.9 Z" fill="#ea4335"/>
<path d="M213.8,748 L226.1,740.9 A14.2,14.2 0 0 1 213.8,762.2 Z" fill="#fbc02d"/>
<path d="M213.8,748 L213.8,762.2 A14.2,14.2 0 0 1 201.5,740.9 Z" fill="#34a04a"/>
<path d="M213.8,741.4 H226.3 A14.2,14.2 0 0 0 201.5,740.9 L207,748 Z" fill="#ea4335"/>
<circle cx="213.8" cy="748" r="6.6" fill="#fff"/><circle cx="213.8" cy="748" r="5.2" fill="#4a86e8"/>
<circle cx="275" cy="747.6" r="12.2" fill="none" stroke="url(#qqg)" stroke-width="7"/>
<path d="M272,763.4 Q269,763.4 269,760.4 Q269,757.6 272.4,757.2 Q273.4,752.6 278.4,753 Q281,749.6 285,751.6 Q288,753.2 287.8,756.6 Q291,757.4 290.6,760.6 Q290.2,763.4 287,763.4 Z" fill="#fff"/>
<rect x="307.6" y="728.6" width="159.6" height="42" rx="3" fill="url(#tbtn)" stroke="#0e2c50" stroke-width="1.2"/><rect x="309.0" y="730" width="156.79999999999998" height="42" rx="2.4" fill="none" stroke="#d0e6f6" stroke-opacity=".55" stroke-width="1"/>
<rect x="469.6" y="728.6" width="158.6" height="42" rx="3" fill="url(#tbtn2)" stroke="#0e2c50" stroke-width="1.2"/><rect x="471.0" y="730" width="155.79999999999998" height="42" rx="2.4" fill="none" stroke="#d0e6f6" stroke-opacity=".55" stroke-width="1"/>
<circle cx="333" cy="748" r="7.6" fill="#8c1414"/>
<path d="M333,738 L333,758 M324.4,743 L341.6,753 M324.4,753 L341.6,743" stroke="#fff" stroke-width="1.1"/>
<path d="M333,740 L340,744 V752 L333,756 L326,752 V744 Z" fill="none" stroke="#fff" stroke-width="1.1"/>
<path d="M327.4,744.6 L333,741.6 L333,748 Z M333,748 L338.8,751.4 L333,754.6 Z" fill="#e01818"/><path d="M333,741.6 L338.8,744.6 L333,748 Z M327.4,751.4 L333,748 L333,754.6 Z" fill="#2a2a2a"/>
<circle cx="333" cy="737.6" r="1.1" fill="#fff"/><circle cx="333" cy="758.4" r="1.1" fill="#fff"/><circle cx="324" cy="742.8" r="1.1" fill="#fff"/><circle cx="342" cy="742.8" r="1.1" fill="#fff"/><circle cx="324" cy="753.2" r="1.1" fill="#fff"/><circle cx="342" cy="753.2" r="1.1" fill="#fff"/>
<text x="353" y="752.4" font-family="Liberation Sans, sans-serif" font-size="12.6" fill="#fff">C:/Users/Admini...</text>
<rect x="479.4" y="732" width="16" height="16" fill="#a9d2f2"/><rect x="495.4" y="732" width="15.8" height="16" fill="#a8dca4"/><rect x="479.4" y="748" width="16" height="15.8" fill="#f8d9a0"/><rect x="495.4" y="748" width="15.8" height="15.8" fill="#d4d8dc"/>
<path d="M480,733.4 L494.6,747.8" stroke="#e03030" stroke-width="3.4" stroke-linecap="round"/><circle cx="494.8" cy="748" r="4.2" fill="#ee2c22"/>
<path d="M496.6,749.6 V764.6 L500,761.4 L502.4,766.6 L504.6,765.6 L502.2,760.6 H507 Z" fill="#fff" stroke="#222" stroke-width=".9"/>
<text x="515.4" y="752.4" font-family="Liberation Sans, sans-serif" font-size="12.6" fill="#fff">Pointofix</text>
<circle cx="1238.8" cy="749" r="8.2" fill="#fff"/><circle cx="1238.8" cy="749" r="7.4" fill="#2a2a2a"/><circle cx="1238.8" cy="749" r="4.7" fill="#ee2a20"/>
<path d="M1257,742.6 H1266 V744.6 H1269.6 V746 H1266 V749 H1269.6 V750.4 H1266 V752.6 H1270.6 V754 H1266 V755.6 H1257 Z" fill="#fff"/><rect x="1259" y="745" width="5" height="8" fill="#2c5a9c"/><rect x="1258.4" y="741" width="6.4" height="2" fill="#fff"/><rect x="1259.6" y="755.6" width="4" height="2" fill="#fff"/>
<path d="M1279,743.6 Q1283,744 1287,741.4 Q1291,744 1295,743.6 Q1295,753 1287,757.6 Q1279,753 1279,743.6 Z" fill="#2f8ff0" stroke="#fff" stroke-width="1.6"/><path d="M1282.6,747 L1287,751.4 L1291.4,747" fill="none" stroke="#fff" stroke-width="1.6"/>
<rect x="1304.4" y="752.6" width="2.2" height="2.4" fill="#fff"/>
<rect x="1307.6" y="750.4" width="2.2" height="4.6" fill="#fff"/>
<rect x="1310.8" y="748" width="2.2" height="7" fill="#fff"/>
<rect x="1314" y="745.4" width="2.2" height="9.6" fill="#fff"/>
<rect x="1317.2" y="742.6" width="2.2" height="12.4" fill="#fff"/>
<path d="M1329.6,746 H1332.6 L1337,741.6 V756.4 L1332.6,752 H1329.6 Z" fill="#fff"/><path d="M1339.6,745.4 Q1342.4,749 1339.6,752.6" fill="none" stroke="#fff" stroke-width="1.2"/>
<rect x="1352" y="729" width="8" height="39" fill="#5a8ac8" fill-opacity=".35"/><rect x="1351.4" y="729" width="1" height="39" fill="#0a2a5a" fill-opacity=".7"/>
</svg>

</body>
</html>
